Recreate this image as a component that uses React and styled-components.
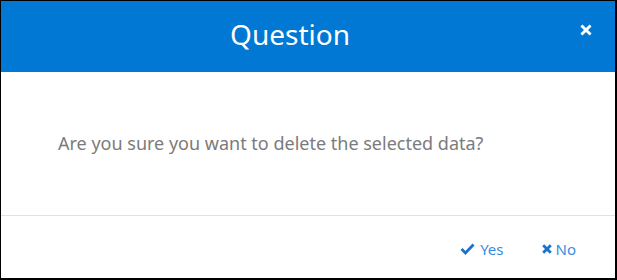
import React from "react";
import styled, { createGlobalStyle } from "styled-components";

const GlobalStyle = createGlobalStyle`
  html, body {
    margin: 0;
    padding: 0;
    background: #ffffff;
  }
  body {
    font-family: "Noto Sans", "Open Sans", sans-serif;
  }
`;

const Dialog = styled.div`
  width: 617px;
  height: 280px;
  box-sizing: border-box;
  border: 1px solid #000;
  border-right-width: 2px;
  border-bottom-width: 2px;
  display: flex;
  flex-direction: column;
  background: #fff;
`;

const Header = styled.div`
  height: 71px;
  box-sizing: border-box;
  background: #0078d4;
  display: flex;
  align-items: flex-start;
  justify-content: center;
  padding: 14px 36px 0 0;
  position: relative;
`;

const Title = styled.h2`
  margin: 0;
  color: #fff;
  font-weight: 400;
  font-size: 28px;
  line-height: 38px;
  font-family: "Noto Sans", sans-serif;
`;

const CloseButton = styled.button`
  position: absolute;
  right: 19px;
  top: 19px;
  width: 20px;
  height: 20px;
  padding: 0;
  border: none;
  background: transparent;
  color: #fff;
  cursor: pointer;
  display: flex;
  align-items: center;
  justify-content: center;
`;

const Body = styled.div`
  flex: 1;
  display: flex;
  align-items: center;
  padding: 0 0 0 57px;
  border-bottom: 1px solid #dee2e6;
`;

const Message = styled.p`
  margin: 0;
  color: #7b7b7b;
  font-size: 18px;
  padding-bottom: 1px;
`;

const Footer = styled.div`
  height: 62px;
  box-sizing: border-box;
  display: flex;
  align-items: center;
  justify-content: flex-end;
  gap: 38px;
  padding: 3px 39px 0 0;
`;

const ActionButton = styled.button`
  display: flex;
  align-items: center;
  gap: ${(p) => p.$gap}px;
  border: none;
  background: transparent;
  padding: 0;
  color: #3a8ce0;
  font-family: "Noto Sans", sans-serif;
  font-size: 15px;
  cursor: pointer;
`;

const Check = () => (
  <svg width="15" height="12" viewBox="0 0 15 12">
    <path d="M1.5 6 L5.5 10 L13.5 1.5" fill="none" stroke="#1a73c9" strokeWidth="2.8" strokeLinejoin="miter" />
  </svg>
);

const Cross = ({ color = "#1a73c9", size = 10, w = 2.8 }) => (
  <svg width={size} height={size} viewBox="0 0 10 10">
    <path d="M1.2 1.2 L8.8 8.8 M8.8 1.2 L1.2 8.8" stroke={color} strokeWidth={w} />
  </svg>
);

export default function App() {
  return (
    <>
      <GlobalStyle />
      <Dialog>
        <Header>
          <Title>Question</Title>
          <CloseButton aria-label="Close">
            <Cross color="#fff" size={12} w={2.4} />
          </CloseButton>
        </Header>
        <Body>
          <Message>Are you sure you want to delete the selected data?</Message>
        </Body>
        <Footer>
          <ActionButton $gap={5}>
            <Check />
            Yes
          </ActionButton>
          <ActionButton $gap={4}>
            <Cross />
            No
          </ActionButton>
        </Footer>
      </Dialog>
    </>
  );
}
